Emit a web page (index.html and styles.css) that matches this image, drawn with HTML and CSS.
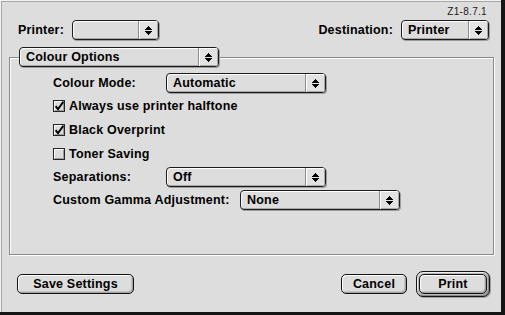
FILE: index.html
```html
<!DOCTYPE html>
<html>
<head>
<meta charset="utf-8">
<link rel="stylesheet" href="styles.css">
</head>
<body>
<div class="window">
  <div class="version">Z1-8.7.1</div>
  <div class="header-row">
    <div class="field">
      <span class="label">Printer:</span>
      <div class="popup w87"><span class="popup-text"></span><span class="popup-arrows"><svg class="arrows" width="7" height="9" viewBox="0 0 7 9" shape-rendering="crispEdges"><rect x="3" y="0" width="1" height="1"/><rect x="2" y="1" width="3" height="1"/><rect x="1" y="2" width="5" height="1"/><rect x="0" y="3" width="7" height="1"/><rect x="0" y="5" width="7" height="1"/><rect x="1" y="6" width="5" height="1"/><rect x="2" y="7" width="3" height="1"/><rect x="3" y="8" width="1" height="1"/></svg></span></div>
    </div>
    <div class="field">
      <span class="label">Destination:</span>
      <div class="popup w88"><span class="popup-text">Printer</span><span class="popup-arrows"><svg class="arrows" width="7" height="9" viewBox="0 0 7 9" shape-rendering="crispEdges"><rect x="3" y="0" width="1" height="1"/><rect x="2" y="1" width="3" height="1"/><rect x="1" y="2" width="5" height="1"/><rect x="0" y="3" width="7" height="1"/><rect x="0" y="5" width="7" height="1"/><rect x="1" y="6" width="5" height="1"/><rect x="2" y="7" width="3" height="1"/><rect x="3" y="8" width="1" height="1"/></svg></span></div>
    </div>
  </div>
  <div class="section-row">
    <div class="popup w200"><span class="popup-text">Colour Options</span><span class="popup-arrows"><svg class="arrows" width="7" height="9" viewBox="0 0 7 9" shape-rendering="crispEdges"><rect x="3" y="0" width="1" height="1"/><rect x="2" y="1" width="3" height="1"/><rect x="1" y="2" width="5" height="1"/><rect x="0" y="3" width="7" height="1"/><rect x="0" y="5" width="7" height="1"/><rect x="1" y="6" width="5" height="1"/><rect x="2" y="7" width="3" height="1"/><rect x="3" y="8" width="1" height="1"/></svg></span></div>
  </div>
  <div class="group">
    <div class="row row-popup">
      <span class="label l113">Colour Mode:</span>
      <div class="popup w160"><span class="popup-text">Automatic</span><span class="popup-arrows"><svg class="arrows" width="7" height="9" viewBox="0 0 7 9" shape-rendering="crispEdges"><rect x="3" y="0" width="1" height="1"/><rect x="2" y="1" width="3" height="1"/><rect x="1" y="2" width="5" height="1"/><rect x="0" y="3" width="7" height="1"/><rect x="0" y="5" width="7" height="1"/><rect x="1" y="6" width="5" height="1"/><rect x="2" y="7" width="3" height="1"/><rect x="3" y="8" width="1" height="1"/></svg></span></div>
    </div>
    <div class="row row-check first-check">
      <svg class="checkbox" width="12" height="12" viewBox="0 0 12 12"><rect x="0.5" y="0.5" width="11" height="11" fill="#dcdcdc" stroke="#262626"/><path d="M1.5 10V1.5H10" stroke="#fff" fill="none"/><path d="M10.5 2V10.5H2" stroke="#9a9a9a" fill="none"/><path d="M2.6 6.2L5 9.2L10.4 1.6" stroke="#000" stroke-width="1.9" fill="none"/></svg>
      <span class="check-label">Always use printer halftone</span>
    </div>
    <div class="row row-check">
      <svg class="checkbox" width="12" height="12" viewBox="0 0 12 12"><rect x="0.5" y="0.5" width="11" height="11" fill="#dcdcdc" stroke="#262626"/><path d="M1.5 10V1.5H10" stroke="#fff" fill="none"/><path d="M10.5 2V10.5H2" stroke="#9a9a9a" fill="none"/><path d="M2.6 6.2L5 9.2L10.4 1.6" stroke="#000" stroke-width="1.9" fill="none"/></svg>
      <span class="check-label">Black Overprint</span>
    </div>
    <div class="row row-check">
      <svg class="checkbox" width="12" height="12" viewBox="0 0 12 12"><rect x="0.5" y="0.5" width="11" height="11" fill="#dcdcdc" stroke="#262626"/><path d="M1.5 10V1.5H10" stroke="#fff" fill="none"/><path d="M10.5 2V10.5H2" stroke="#9a9a9a" fill="none"/></svg>
      <span class="check-label">Toner Saving</span>
    </div>
    <div class="row row-popup sep">
      <span class="label l113">Separations:</span>
      <div class="popup w160"><span class="popup-text">Off</span><span class="popup-arrows"><svg class="arrows" width="7" height="9" viewBox="0 0 7 9" shape-rendering="crispEdges"><rect x="3" y="0" width="1" height="1"/><rect x="2" y="1" width="3" height="1"/><rect x="1" y="2" width="5" height="1"/><rect x="0" y="3" width="7" height="1"/><rect x="0" y="5" width="7" height="1"/><rect x="1" y="6" width="5" height="1"/><rect x="2" y="7" width="3" height="1"/><rect x="3" y="8" width="1" height="1"/></svg></span></div>
    </div>
    <div class="row row-popup gamma">
      <span class="label l187">Custom Gamma Adjustment:</span>
      <div class="popup w160"><span class="popup-text">None</span><span class="popup-arrows"><svg class="arrows" width="7" height="9" viewBox="0 0 7 9" shape-rendering="crispEdges"><rect x="3" y="0" width="1" height="1"/><rect x="2" y="1" width="3" height="1"/><rect x="1" y="2" width="5" height="1"/><rect x="0" y="3" width="7" height="1"/><rect x="0" y="5" width="7" height="1"/><rect x="1" y="6" width="5" height="1"/><rect x="2" y="7" width="3" height="1"/><rect x="3" y="8" width="1" height="1"/></svg></span></div>
    </div>
  </div>
  <div class="button-row">
    <div class="button save">Save Settings</div>
    <div class="spacer"></div>
    <div class="button cancel">Cancel</div>
    <div class="default-ring"><div class="button print">Print</div></div>
  </div>
</div>
</body>
</html>
```

FILE: styles.css
```css
html, body {
  margin: 0;
  padding: 0;
  background: #dddddd;
}

.window {
  width: 505px;
  height: 315px;
  box-sizing: border-box;
  background: #dddddd;
  border-right: 4px solid #151515;
  border-bottom: 3px solid #151515;
  box-shadow: inset 1px 1px 0 #f2f2f2, inset 2px 2px 0 #a6a6a6;
  font-family: "Liberation Sans", Arial, sans-serif;
  font-weight: bold;
  font-size: 12.5px;
  letter-spacing: 0.2px;
  color: #000;
  display: flex;
  flex-direction: column;
}

.version {
  height: 20px;
  box-sizing: border-box;
  padding: 7px 14px 0 0;
  text-align: right;
  font-weight: normal;
  font-size: 10px;
  line-height: 10px;
  letter-spacing: 0.3px;
  color: #1a1a1a;
}

.header-row {
  display: flex;
  justify-content: space-between;
  align-items: center;
  height: 20px;
  padding: 0 12px 0 18px;
}

.field {
  display: flex;
  align-items: center;
  gap: 8px;
}

.label {
  line-height: 14px;
  white-space: nowrap;
}

.l113 { width: 113px; }
.l187 { width: 187px; }

.popup {
  height: 20px;
  box-sizing: border-box;
  display: flex;
  align-items: stretch;
  border: 1px solid #1c1c1c;
  border-radius: 4px;
  background: #dddddd;
  box-shadow: inset 1px 1px 0 #ffffff, inset -1px -1px 0 #a8a8a8, 1px 1px 0 #9c9c9c;
  overflow: hidden;
}

.w87 { width: 87px; }
.w88 { width: 88px; }
.w160 { width: 160px; }
.w200 { width: 200px; }

.popup-text {
  flex: 1;
  padding-left: 6px;
  line-height: 18px;
  white-space: nowrap;
}

.popup-arrows {
  width: 19px;
  display: flex;
  align-items: center;
  justify-content: center;
  border-left: 1px solid #8c8c8c;
  background: #e2e2e2;
  box-shadow: inset 1px 1px 0 #ffffff, inset -1px -1px 0 #a8a8a8;
}

.arrows {
  display: block;
  fill: #000;
}

.section-row {
  display: flex;
  padding-left: 19px;
  margin-top: 7px;
  position: relative;
  z-index: 1;
}

.group {
  margin: -10px 7px 0 9px;
  height: 198px;
  box-sizing: border-box;
  border: 1px solid #8a8a8a;
  box-shadow: inset 1px 1px 0 #ffffff, 1px 1px 0 #ffffff;
  padding: 15px 0 0 43px;
  display: flex;
  flex-direction: column;
}

.row {
  display: flex;
  align-items: center;
}

.row-popup {
  height: 20px;
}

.row-check {
  height: 24px;
  gap: 4px;
}

.first-check {
  margin-top: 1px;
}

.checkbox {
  display: block;
  flex: none;
}

.check-label {
  line-height: 14px;
  white-space: nowrap;
}

.sep {
  margin-top: 1px;
}

.gamma {
  margin-top: 3px;
}

.button-row {
  display: flex;
  align-items: center;
  margin-top: 16px;
  padding: 0 11px 0 17px;
}

.spacer {
  flex: 1;
}

.button {
  height: 20px;
  box-sizing: border-box;
  border: 1px solid #141414;
  border-radius: 5px;
  background: #dddddd;
  box-shadow: inset 1px 1px 0 #ffffff, inset -1px -1px 0 #a0a0a0, inset -2px -2px 0 #c4c4c4;
  text-align: center;
  line-height: 18px;
  white-space: nowrap;
}

.save { width: 117px; }
.cancel { width: 66px; margin-right: 9px; }
.print { width: 68px; }

.default-ring {
  border: 1px solid #141414;
  border-radius: 7px;
  padding: 2px;
  background: #b8b8b8;
  box-shadow: inset 1px 1px 0 #eeeeee, inset -1px -1px 0 #8a8a8a, 1px 1px 0 #a0a0a0;
}
```
